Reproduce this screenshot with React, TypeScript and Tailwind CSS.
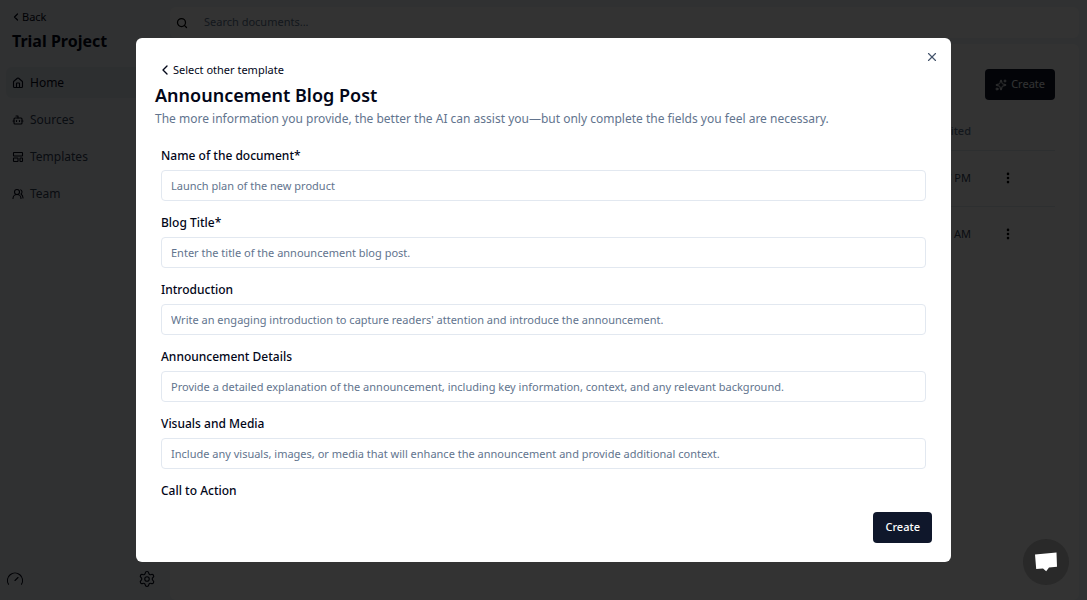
import { useState } from 'react'
import {
  Bot,
  ChevronLeft,
  EllipsisVertical,
  Gauge,
  House,
  LayoutTemplate,
  Search,
  Settings,
  Sparkles,
  UsersRound,
  X,
} from 'lucide-react'

const navItems = [
  { label: 'Home', icon: House, active: true },
  { label: 'Sources', icon: Bot, active: false },
  { label: 'Templates', icon: LayoutTemplate, active: false },
  { label: 'Team', icon: UsersRound, active: false },
]

const documents = [
  { id: 'doc-1', edited: '4:27 PM' },
  { id: 'doc-2', edited: '9:19 AM' },
]

const fields = [
  { id: 'name', label: 'Name of the document*', placeholder: 'Launch plan of the new product' },
  { id: 'title', label: 'Blog Title*', placeholder: 'Enter the title of the announcement blog post.' },
  {
    id: 'introduction',
    label: 'Introduction',
    placeholder: "Write an engaging introduction to capture readers' attention and introduce the announcement.",
  },
  {
    id: 'details',
    label: 'Announcement Details',
    placeholder:
      'Provide a detailed explanation of the announcement, including key information, context, and any relevant background.',
  },
  {
    id: 'visuals',
    label: 'Visuals and Media',
    placeholder: 'Include any visuals, images, or media that will enhance the announcement and provide additional context.',
  },
  { id: 'cta', label: 'Call to Action', placeholder: '' },
]

function Sidebar() {
  return (
    <aside className="flex w-[170px] shrink-0 flex-col text-slate-950">
      <div className="px-3 pt-2">
        <a href="#" className="flex items-center text-[11px] leading-[18px]">
          <ChevronLeft className="-ml-0.5 size-3" strokeWidth={2.5} />
          Back
        </a>
        <h1 className="mt-[3px] text-base leading-6 font-bold">Trial Project</h1>
      </div>
      <nav className="mt-3.5 flex flex-col gap-1.5 px-1.5">
        {navItems.map(({ label, icon: Icon, active }) => (
          <a
            key={label}
            href="#"
            className={`flex h-[31px] items-center gap-1.5 rounded-md px-1.5 text-xs ${
              active ? 'bg-slate-200' : 'text-slate-700'
            }`}
          >
            <Icon className="size-3 text-slate-950" strokeWidth={2.2} />
            {label}
          </a>
        ))}
      </nav>
      <div className="mt-auto flex items-center justify-between px-1.5 pr-3.5 pb-3">
        <button aria-label="Usage">
          <Gauge className="size-[18px]" strokeWidth={1.5} />
        </button>
        <button aria-label="Settings">
          <Settings className="size-[18px]" strokeWidth={1.5} />
        </button>
      </div>
    </aside>
  )
}

function Documents() {
  return (
    <main className="flex flex-1 flex-col gap-1.5 pt-[7px] pr-2">
      <label className="flex h-[31px] items-center gap-4 rounded-md bg-white px-1.5">
        <Search className="size-3" strokeWidth={2.5} />
        <input
          type="text"
          aria-label="Search documents"
          placeholder="Search documents..."
          className="flex-1 text-[11px] outline-none placeholder:text-slate-500"
        />
      </label>
      <section className="flex-1 rounded-md bg-white px-6 pt-[25px]">
        <div className="flex justify-end">
          <button className="flex h-[31px] items-center gap-1 rounded bg-slate-900 px-2.5 text-[11px] text-slate-50">
            <Sparkles className="size-3" />
            Create
          </button>
        </div>
        <table className="mt-3 w-full text-[11px]">
          <thead>
            <tr className="h-[38px] border-b border-slate-200 text-slate-500">
              <th className="text-right font-medium">Last edited</th>
              <th className="w-[84px]" />
            </tr>
          </thead>
          <tbody>
            {documents.map((doc) => (
              <tr key={doc.id} className="h-14 border-b border-slate-200 last:border-0">
                <td className="text-right text-slate-700">{doc.edited}</td>
                <td className="pl-[30px]">
                  <button aria-label="Document actions" className="block">
                    <EllipsisVertical className="size-3.5" strokeWidth={2.5} />
                  </button>
                </td>
              </tr>
            ))}
          </tbody>
        </table>
      </section>
    </main>
  )
}

function TemplateDialog({ onClose }: { onClose: () => void }) {
  return (
    <div
      role="dialog"
      aria-labelledby="dialog-title"
      className="relative flex h-full w-full max-w-[815px] flex-col rounded-md bg-white px-[19px] pt-6 pb-[19px] text-slate-950"
    >
      <button
        onClick={onClose}
        aria-label="Close"
        className="absolute top-3 right-3 text-slate-600"
      >
        <X className="size-3.5" />
      </button>
      <button className="flex items-center self-start pl-0.5 text-[11px] leading-4">
        <ChevronLeft className="size-4" />
        Select other template
      </button>
      <h2 id="dialog-title" className="mt-[3px] text-lg leading-7 font-semibold">
        Announcement Blog Post
      </h2>
      <p className="mt-px text-xs leading-[18px] text-slate-500">
        The more information you provide, the better the AI can assist you—but only complete the fields you feel are
        necessary.
      </p>
      <form className="mt-4 flex min-h-0 flex-1 flex-col" onSubmit={(e) => e.preventDefault()}>
        <div className="flex min-h-0 flex-1 flex-col gap-[13px] overflow-hidden px-1.5 pt-[3px]">
          {fields.map((field) => (
            <div key={field.id} className="flex shrink-0 flex-col gap-[5px]">
              <label htmlFor={field.id} className="text-xs leading-[18px] font-medium">
                {field.label}
              </label>
              <input
                id={field.id}
                type="text"
                placeholder={field.placeholder}
                className="h-[31px] rounded border border-slate-200 px-[9px] text-[11px] outline-none placeholder:text-slate-500"
              />
            </div>
          ))}
        </div>
        <button type="submit" className="mt-2 h-[31px] self-end rounded bg-slate-900 px-3 text-[11px] font-medium text-white">
          Create
        </button>
      </form>
    </div>
  )
}

export default function App() {
  const [open, setOpen] = useState(true)

  return (
    <div className="relative flex h-screen overflow-hidden bg-slate-100 font-['Noto_Sans',sans-serif]">
      <Sidebar />
      <Documents />
      {open && (
        <div className="absolute inset-0 flex justify-center bg-black/80 py-[38px]">
          <TemplateDialog onClose={() => setOpen(false)} />
        </div>
      )}
      <button
        aria-label="Open chat"
        className="absolute right-[18px] bottom-[15px] flex size-[46px] items-center justify-center rounded-full bg-[#292929] text-white"
      >
        <svg viewBox="0 0 24 20" className="w-6" fill="currentColor">
          <path d="M1 2.500 22.500 .5l.5 14.200-8 .8-2.800 3.800-3.200-2.900-6.800.6z" />
        </svg>
      </button>
    </div>
  )
}
